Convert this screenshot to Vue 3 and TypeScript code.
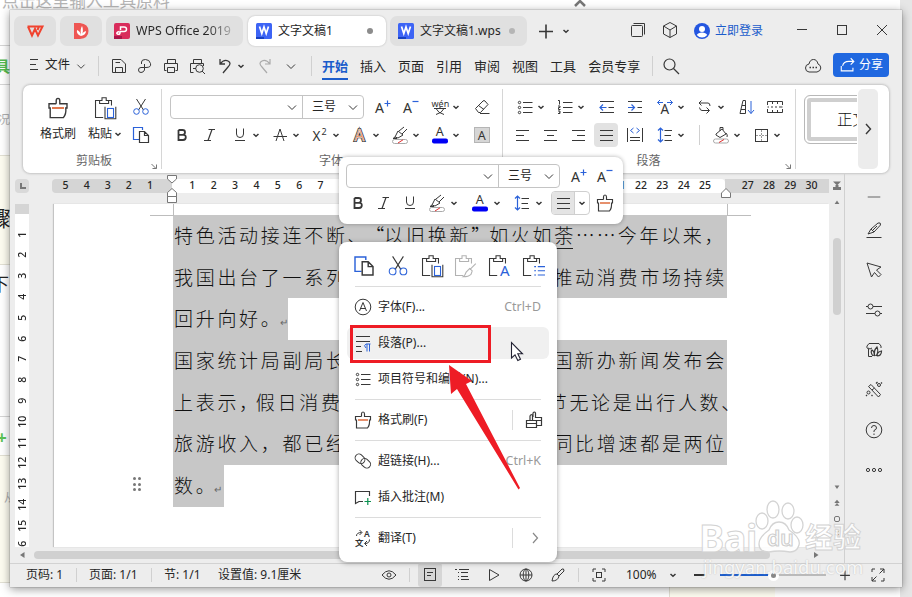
<script setup lang="ts">
import { h } from 'vue'

interface Tool { i?: string; split?: boolean; on?: boolean; gap?: number; sep?: boolean }

const B = 'stroke="#2b62d9"'
const clip = '<path d="M5.500 3.700H2.100V17.900H8.500M13 3.700H15.400V8M5.500 6.200V3.700H7.500V1.500H11V3.700H13V6.200Z"/>'
const pot = '<path d="M8.500 6.500V4Q8.500 2 10 2T11.500 4V6.500H17.500V10H16.500Q17 15 14.500 18H3.500V10H2.500V6.500H8.500" stroke-width="1.150"/><path d="M5 10H15" stroke="#d9541e" stroke-width="1.300"/>'
const hl = '<path d="M5 12L8 6L13 10L8 13ZM9 6L14 2M12 9L17 4M5 12L3 13.500H7"/><rect x="2.500" y="14.500" width="15" height="4" rx="2" stroke="#aaa"/><path d="M8 18L13 14.800" stroke="#e03030"/>'
const icons: Record<string, string> = {
  save: '<path d="M3.500 3.500H12L16.500 8V16.500H3.500ZM6.500 16V11.500H13.500V16M6.500 6.500H11"/>',
  pdf: '<path d="M6.500 8V6Q6.500 3.500 10.500 3.500T15.500 7.500T11 11.500H9.500V14Q8.500 16.500 6 16.500T3.500 14T6 11.500H9.500V8"/>',
  print: '<path d="M6.500 7V3.500H14.500V7M5.500 14.500H3.500V7.500H16.500V14.500H14.500M6.500 11.500H13.500V16.500H6.500Z"/>',
  preview: '<path d="M6.500 7V3.500H14.500V7M6.500 16.500H3.500V7.500H16.500V10M6 12.500H9"/><circle cx="12.500" cy="12.500" r="3.800"/><path d="M15 15L18 18"/>',
  undo: '<path d="M5 3V8H10M5 8Q9 3 13 5T13 11L8 17" stroke-width="1.300"/>',
  redo: '<path d="M15 3V8H10M15 8Q11 3 7 5T7 11L12 17" stroke="#aaa" stroke-width="1.200"/>',
  menu: '<path d="M6 4.500H14M6 9.500H12M6 14.500H14" stroke-width="1.200"/>',
  search: '<circle cx="8.500" cy="8.500" r="5.500" stroke-width="1.200"/><path d="M12.500 12.500L18 18" stroke-width="1.200"/>',
  cloud: '<path d="M6 16Q2.500 15.500 2.500 12T6 8Q7 3.500 10.500 3.500T15 8Q17.800 9 17.800 12T14 16Z"/><path d="M6.500 11.500h1.500M9.500 11.500h1.500M12.500 11.500h1.500" stroke-width="1.500"/>',
  share: '<path d="M2.500 11V16.500H15.500V13M4 11Q5 6 11 6H16M13 2.500L16.500 6L13 9.500" stroke="#fff" stroke-width="1.200"/>',
  stack: '<rect x="3.500" y="5.500" width="11" height="11" rx="1"/><path d="M5.500 3.500H16.500V14.500"/>',
  cube: '<path d="M10 2.500L16.500 6V14L10 17.500L3.500 14V6ZM3.500 6L10 10L16.500 6M10 10V17.500"/>',
  brush: pot,
  paste: clip + `<rect x="12.100" y="10.400" width="5" height="7.500" ${B}/><path d="M10 9V19H19V9"/>`,
  pasteFmt: '<g opacity=".38">' + clip + '<path d="M19 8L14 13M14 12L11 15Q10 18 8.500 19Q13 19 15 17L16 14Z"/></g>',
  pasteTxt: clip + '<text x="10.800" y="18.500" font-size="12.500" fill="#2b62d9" stroke="none">A</text>',
  pasteLst: clip + `<path d="M11 10.500h1.500M14 10.500h6M11 14h1.500M14 14h6M11 17.500h1.500M14 17.500h6" ${B}/>`,
  cut: `<path d="M5.500 2L12.500 13M14.500 2L7.500 13"/><circle cx="5.500" cy="14.500" r="2.800" ${B}/><circle cx="14.500" cy="14.500" r="2.800" ${B}/>`,
  copy: `<path d="M8 14.500H2.500V2.500H11.500V5" ${B} stroke-width="1.200"/><path d="M8.500 6.500H13.500L17.500 10.500V17.500H8.500ZM13.500 6.500V10.500H17.500" stroke-width="1.200"/>`,
  big: `<text x="2" y="16" font-size="14" stroke="none" fill="#333">A</text><path d="M11.500 6.500H17.500M14.500 3.500V9.500" ${B} stroke-width="1.200"/>`,
  small: `<text x="2" y="16" font-size="14" stroke="none" fill="#333">A</text><path d="M11.500 4.500H17.500" ${B} stroke-width="1.200"/>`,
  wen: '<text x="1.500" y="10" font-size="9" stroke="none" fill="#333">wén</text><path d="M4 11.500H16M10 9.500V11.500M6 11.500Q8 16 14 17.500M14 11.500Q12 16 6 17.500"/>',
  eraser: '<path d="M3.500 11.500L11 4Q12 3 13 4L16 7.500L8.500 15.500H6.500ZM6.500 8.500L12 12.500M8 16.500H17.500"/>',
  bold: '<path d="M6.500 5V15H11Q13.800 15 13.800 12.300T11 9.800H6.500M6.500 5H10.500Q13 5 13 7.300T10.500 9.800" stroke-width="1.800"/>',
  italic: '<path d="M8.500 4.500H15M4 15.500H11M12 4.500L8 15.500" stroke-width="1.200"/>',
  under: '<path d="M6.500 3.500V9Q6.500 12.500 10 12.500T13.500 9V3.500M5 15.500H15"/>',
  strike: '<path d="M6 16L10 4L14 16" /><path d="M3.500 11.500H17"/>',
  sup: '<text x="2.500" y="15.500" font-size="13.500" stroke="none" fill="#333">X</text><text x="11.500" y="9.500" font-size="9" stroke="none" fill="#333">2</text>',
  effect: '<text x="4.500" y="16" font-size="15.500" stroke="#333" stroke-width="2.200" fill="#fff">A</text><text x="4.500" y="16" font-size="15.500" stroke="#fff" stroke-width=".5" fill="#e8743b">A</text>',
  hl,
  color: '<text x="5.800" y="11" font-size="12.500" stroke="none" fill="#333">A</text><rect x="2" y="13.500" width="16" height="5" rx="2" fill="#0000f5" stroke="none"/>',
  shade: '<rect x="2.500" y="2.500" width="15" height="15" fill="#d6d6d6" stroke="#b5b5b5"/><text x="5.800" y="14.500" font-size="12.500" stroke="none" fill="#333">A</text>',
  bullets: '<circle cx="4.500" cy="5.500" r="1.200"/><circle cx="4.500" cy="10.500" r="1.200"/><circle cx="4.500" cy="15.500" r="1.200"/><path d="M8 5.500H17.500M8 10.500H17.500M8 15.500H17.500"/>',
  numbers: '<path d="M3 3.500H4.500V7.500M3 9H5V10.500H3.500V12.500H5.500M3 14H5V16.500H3M4 15.200H5"/><path d="M8 5.500H17.500M8 10.500H17.500M8 15.500H17.500"/>',
  outdent: `<path d="M3 4.500H17M11.500 10.500H17M3 15.500H17"/><path d="M3 10.500H9.500M6 7.500L3 10.500L6 13.500" ${B} stroke-width="1.200"/>`,
  indent: `<path d="M3 4.500H17M12.500 10.500H17M3 15.500H17"/><path d="M3 10.500H9.500M6.500 7.500L9.500 10.500L6.500 13.500" ${B} stroke-width="1.200"/>`,
  charw: `<text x="5.400" y="17" font-size="13.500" stroke="none" fill="#333">A</text><path d="M2.500 5.500H8M5 3L2.500 5.500L5 8M17.500 5.500H12M15 3L17.500 5.500L15 8" ${B}/>`,
  wrap: '<path d="M6.500 3.500L4 6L6.500 8.500M4 6H13Q15 6 15 9M4.500 10.500Q5 13.500 7 13.500H14M11.500 10.500L14.500 13.500L11.500 16.500"/>',
  sort: `<path d="M3 16.500L6 3.500H8.500V16.500ZM4 12.500H8.500M5 8.500H8.500"/><path d="M14 4V16.500M11 13L14 16.500L17 13" ${B}/>`,
  table: '<path d="M2.500 8V4.500H17.500V8M2.500 12V15.500H17.500V12M2.500 10H4M6 10H8M10 10H12M14 10H17.500M7.500 4.500V7M12.500 4.500V7M7.500 13V15.500M12.500 13V15.500"/>',
  left: '<path d="M4 5.500H17M4 10.500H12M4 15.500H17"/>',
  center: '<path d="M4 5.500H17M7 10.500H14M4 15.500H17"/>',
  right: '<path d="M4 5.500H17M9 10.500H17M4 15.500H17"/>',
  justify: '<path d="M4 5.500H17M4 10.500H17M4 15.500H17"/>',
  dist: `<path d="M3.500 3V17M18.500 3V17M6 12.500H16M6 15.500H16"/><path d="M9.500 3L6.500 5.500L9.500 8M12.500 3L15.500 5.500L12.500 8" ${B}/>`,
  spacing: `<path d="M9.500 5.500H17M9.500 10.500H16M9.500 15.500H17"/><path d="M5.500 3V17M3 5.500L5.500 3L8 5.500M3 14.500L5.500 17L8 14.500" ${B} stroke-width="1.200"/>`,
  bucket: '<path d="M5 9L11 4L15 9L9 12.500L5 10ZM9 6V2.500H12V5M15 8Q17 10 16 12"/><rect x="2.500" y="14" width="15" height="4" rx="2" stroke="#aaa"/><path d="M8 17.500L13 14.500" stroke="#e03030"/>',
  border: '<rect x="4.500" y="4.500" width="12" height="12"/><path d="M10.500 5V16.500M5 10.500H16.500" stroke="#999" stroke-dasharray="2 1"/>',
  font: '<circle cx="10" cy="10" r="7.800"/><path d="M6.500 14L10 5.500L13.500 14M7.500 11.500H12.500"/>',
  para: `<path d="M3 3.500H17M3 8.500H17M3 13.500H8M3 18.500H9"/><path d="M16.500 11V18.500M14 11V18.500M17.500 11H13Q10 12.500 13 15" ${B}/>`,
  pots: '<path d="M2.500 10.500H12.500V17.500H2.500ZM2.500 13.500H12.500M6 10V6Q7.500 3 8.500 6V10M9 7V3Q10.500 1 11.500 3V7.500H17.500V15.500H13M13 10.500H17.500" stroke-width="1.200"/>',
  link: '<rect x="1.800" y="4" width="10.500" height="7.500" rx="3.700" transform="rotate(42 7 7.700)"/><rect x="7.500" y="8.500" width="10.500" height="7.500" rx="3.700" transform="rotate(42 12.700 12.200)"/>',
  note: '<path d="M16.500 9V4.500H2.500V16.500L6 14.500H10" stroke-width="1.150"/><path d="M11.500 14.500H18M14.800 11V18" stroke="#0a9150" stroke-width="1.200"/>',
  trans: '<text x="11" y="9" font-size="8.500" font-weight="600" stroke="none" fill="#333">A</text><text x="2" y="17.500" font-size="8.500" font-weight="600" stroke="none" fill="#333">文</text><path d="M3.500 8Q3.500 4.500 8.500 4.500M6.500 2L9 4.500L6.500 7M16.500 11.500Q16.500 15.500 12 15.500M14 13L11.500 15.500L14 18"/>',
  eye: '<path d="M3 10Q10 1.500 17 10Q10 18.500 3 10Z"/><circle cx="10" cy="10" r="2"/>',
  doc: '<rect x="4.500" y="3.500" width="11" height="12"/><path d="M7 7.500H13M7 10.500H11"/>',
  outline: '<path d="M3 4.500H5M7 4.500H17M6 7.500H7M9 7.500H16M6 11.500H7M9 11.500H16M6 14.500H7M9 14.500H17"/>',
  play: '<path d="M5.500 4.500L15 10L5.500 15.500Z"/>',
  globe: '<circle cx="10" cy="10" r="6"/><ellipse cx="10" cy="10" rx="2.800" ry="6"/><path d="M4 10H16M10 4V16"/>',
  pen: '<path d="M9 9L14 4Q16 3 16 6L11 11ZM9 9Q5 9 4 16Q10 16 11 11"/>',
  fit: '<path d="M4 7V4H7M13 4H16V7M16 13V16H13M7 16H4V13"/><rect x="7.500" y="7.500" width="5" height="5"/>',
  full: '<path d="M4 7V4H7M16 13V16H13M11.500 8.500L16 4M12 4H16V8M8.500 11.500L4 16M4 12V16H8"/>',
  dash: '<path d="M3 10H17" stroke="#999" stroke-width="1.800"/>',
  draw: '<path d="M4 14L7 9L14 3Q17 2 16.500 5L10 12ZM7 9L10 12M2.500 17.500H17.500M9 10L13 6"/>',
  pointer: '<path d="M3 3L17 7L12.500 10L17 14.500L14.500 17L10.500 12.500L7.500 17Z"/>',
  sliders: '<circle cx="6.500" cy="6.500" r="2.500"/><path d="M2 6.500H4M9 6.500H18M2 13.500H11M16 13.500H18"/><circle cx="13.500" cy="13.500" r="2.500"/>',
  gallery: '<path d="M8 16.500H4.500V9Q2 8 3 6L5 3.500H15L17 6V8M4 8Q6 10 8 8"/><path d="M9 16Q6 12 8 10Q11 12 10 16M11 16Q9 11 13 7Q15 12 12 16M13 16Q13 12 17.500 11Q17.500 16 13 16" stroke-width="1.200"/>',
  wand: '<path d="M4.500 6.500L7 4.500L16.500 14.500L14.500 17ZM8 10L10.500 8"/><circle cx="15" cy="5" r="1.500"/><circle cx="4.500" cy="12.500" r="1.500"/><path d="M12 3.500L13.500 2M17 2.500L18 3.500M7.500 15L8.500 16M3 16L2 15" stroke-width="1.300"/>',
  help: '<circle cx="10" cy="10" r="7.800"/><path d="M7.500 8Q7.500 5.500 10 5.500T12.500 8Q12.500 9.500 10 10.500V12M10 13.500V15"/>',
  more: '<circle cx="4" cy="10" r="1.600"/><circle cx="10" cy="10" r="1.600"/><circle cx="16" cy="10" r="1.600"/>',
  caret: '<path d="M7.500 9L10 11.300L12.500 9" stroke-width="1.500"/>',
  down: '<path d="M6 8.500L10 12.500L14 8.500"/>',
  next: '<path d="M8 5L12.500 10L8 15" stroke-width="1.400"/>',
  sub: '<path d="M9 5L13.500 10L9 15" stroke="#888" stroke-width="1.200"/>',
  launch: '<path d="M7.500 8L12 12.500M12.500 8.500V12.500H8.500" stroke="#777"/>',
  plus: '<path d="M3 10.500H17M10 3.500V17.500" stroke-width="1.600"/>',
  min: '<path d="M5 9.500H15"/>',
  max: '<rect x="5.500" y="5.500" width="9" height="9"/>',
  close: '<path d="M5 5L15 15M15 5L5 15"/>',
  user: '<circle cx="10" cy="10" r="8" fill="#2456e0" stroke="none"/><circle cx="10" cy="8" r="3" fill="#fff" stroke="none"/><path d="M4.800 14Q6 11.500 10 11.500T15.200 14Q13 16.500 10 16.500T4.800 14Z" fill="#fff" stroke="none"/>',
  wps: '<path d="M2.500 5.500H14L12.500 9M3 5.500L7 14.500L10 8L13 14.500L17.500 5.500H13" stroke="#f0432f" stroke-width="2"/>',
  docer: '<path d="M3 2H9Q17.500 3 17.500 10T9 18H3Z" fill="#ee5653" stroke="none"/><path d="M10 15Q5 13 6 9Q9 10 10 14Q9 8 11 5Q13 9 10.500 15Q11 11 15 10Q15 14 10 15Z" fill="#fff" stroke="none"/>',
  red: '<rect x="2" y="2" width="16" height="16" rx="2" fill="#d92c5b" stroke="none"/><path d="M2 15H10V18H2Z" fill="#a8164a" stroke="none"/><path d="M8.500 9V6H12Q14.500 6 14.500 8.200T12 10.500H8V12Q7.500 14 5.500 13T7 10.500" stroke="#fff" stroke-width="1.500"/>',
  blue: '<rect x="2" y="2" width="16" height="16" rx="1.500" fill="#3d64f5" stroke="none"/><path d="M2 16H10V18H2Z" fill="#1740c0" stroke="none"/><path d="M5.500 5.500L7.800 12.500L10 6L12.200 12.500L14.500 5.500" stroke="#fff" stroke-width="1.700"/>',
  pin: '<path d="M6 4.500H14L10 8.500ZM8.500 8H11.500V10H8.500ZM6 10H14V13H6Z" fill="#777" stroke="none"/>',
  up: '<path d="M7 12.500H13L10 8Z" fill="#777" stroke="none"/>',
  dn: '<path d="M7 8H13L10 12.500Z" fill="#777" stroke="none"/>',
  upup: '<path d="M7 9.500H13L10 6ZM7 13.500H13L10 10ZM7 9.500H13V10H7Z" fill="#777" stroke="none"/>',
  dndn: '<path d="M7 6H13L10 9.500ZM7 10H13L10 13.500Z" fill="#777" stroke="none"/>',
  ltri: '<path d="M12.500 7V13L8 10Z" fill="#777" stroke="none"/>',
  rtri: '<path d="M8 7V13L12.500 10Z" fill="#777" stroke="none"/>',
}
const Icon = (p: { n: string }) => h('svg', { class: 'ic', viewBox: '0 0 20 20', innerHTML: icons[p.n] })

const quick: Tool[] = [{ i: 'save' }, { i: 'pdf' }, { i: 'print' }, { i: 'preview' }]
const menus = ['开始', '插入', '页面', '引用', '审阅', '视图', '工具', '会员专享']
const font1: Tool[] = [{ i: 'big' }, { i: 'small' }, { gap: 3 }, { i: 'wen', split: true }, { i: 'eraser' }]
const font2: Tool[] = [{ i: 'bold' }, { i: 'italic' }, { gap: 4 }, { i: 'under', split: true }, { i: 'strike', split: true }, { i: 'sup', split: true }, { i: 'effect', split: true }, { i: 'hl', split: true }, { i: 'color', split: true }, { i: 'shade' }]
const para1: Tool[] = [{ gap: 5 }, { i: 'bullets', split: true }, { i: 'numbers', split: true }, { i: 'outdent' }, { i: 'indent' }, { gap: 4 }, { i: 'charw', split: true }, { i: 'wrap', split: true }, { i: 'sort' }, { i: 'table' }]
const para2: Tool[] = [{ i: 'left' }, { i: 'center' }, { i: 'right' }, { i: 'justify', on: true }, { i: 'dist' }, { gap: 5 }, { i: 'spacing', split: true }, { gap: 6 }, { sep: true }, { gap: 9 }, { i: 'bucket', split: true }, { i: 'border', split: true }]
const clips = ['copy', 'cut', 'paste', 'pasteFmt', 'pasteTxt', 'pasteLst']
const side = ['dash', 'draw', 'pointer', 'sliders', 'gallery', 'wand', 'help', 'more']

interface Entry { icon: string; label: string; key?: string; extra?: string; hover?: boolean }
const sections: Entry[][] = [
  [
    { icon: 'font', label: '字体(F)...', key: 'Ctrl+D' },
    { icon: 'para', label: '段落(P)...', hover: true },
    { icon: 'bullets', label: '项目符号和编号(N)...' },
  ],
  [{ icon: 'brush', label: '格式刷(F)', extra: 'pots' }],
  [
    { icon: 'link', label: '超链接(H)...', key: 'Ctrl+K' },
    { icon: 'note', label: '插入批注(M)' },
  ],
  [{ icon: 'trans', label: '翻译(T)', extra: 'sub' }],
]
const lines: { a: string; c?: string; b?: string; kind?: string }[] = [
  { a: '特色活动接连不断、', kind: 'first' },
  { a: '我国出台了一系列', b: '推动消费市场持续' },
  { a: '回升向好。', kind: 'end' },
  { a: '国家统计局副局长', b: '国新办新闻发布会' },
  { a: '上表示，', c: '假日消费', b: '节无论是出行人数、', kind: 'tight' },
  { a: '旅游收入，都已经', b: '同比增速都是两位' },
  { a: '数。', kind: 'end' },
]
</script>

<template>
  <div class="desk">
    <div class="behind">
      <i class="b-line l1"></i><i class="b-line l2"></i><i class="b-line l3"></i><i class="b-cream c1"></i><i class="b-cream c2"></i><i class="b-cream c3"></i>
      <span class="b-title">点击这里输入工具原料</span>
      <span class="b-green">工具</span>
      <span class="b-gray">况</span>
      <span class="b-dark">骤</span>
      <span class="b-dark two">下</span>
      <span class="b-plus">+</span>
      <span class="b-gray low">从</span>
      <svg class="b-up" viewBox="0 0 14 8"><path d="M2 7L7 2L12 7" fill="none" stroke="#777" stroke-width="2.500" /></svg>
    </div>

    <div class="win">
      <header class="tabs">
        <div class="tab ico"><Icon n="wps" /></div>
        <div class="tab ico"><Icon n="docer" /></div>
        <div class="tab wide"><Icon n="red" /><span class="fade">WPS Office 2019</span></div>
        <div class="tab wide active"><Icon n="blue" /><span>文字文稿1</span><i class="dot"></i></div>
        <div class="tab wide"><Icon n="blue" /><span>文字文稿1.wps</span><i class="dot pale"></i></div>
        <div class="add"><Icon n="plus" /><Icon n="caret" /></div>
        <div class="account"><Icon n="stack" /><Icon n="cube" /><span class="login"><Icon n="user" />立即登录</span></div>
        <div class="sys"><Icon n="min" /><Icon n="max" /><Icon n="close" /></div>
      </header>

      <nav class="menubar">
        <Icon n="menu" class="burger" /><span class="file">文件</span><Icon n="down" class="fdown" />
        <i class="vs"></i>
        <div class="quick"><Icon v-for="q in quick" :key="q.i" :n="q.i!" /></div>
        <Icon n="undo" class="undo" /><Icon n="caret" class="ucaret" /><Icon n="redo" class="redo" /><Icon n="down" class="qdown" />
        <i class="vs"></i>
        <div class="menus"><span v-for="(m, k) in menus" :key="m" :class="{ cur: k === 0 }">{{ m }}</span></div>
        <i class="vs"></i>
        <Icon n="search" class="find" />
        <div class="right"><Icon n="cloud" /><button class="share"><Icon n="share" />分享</button></div>
      </nav>

      <section class="ribbon">
        <div class="group clipb">
          <div class="clip-body">
            <div class="bigbtn"><Icon n="brush" class="lg" /><span>格式刷</span></div>
            <div class="bigbtn"><Icon n="paste" class="lg" /><span>粘贴<Icon n="caret" class="in" /></span></div>
            <div class="pair"><Icon n="cut" /><Icon n="copy" /></div>
          </div>
          <footer>剪贴板<Icon n="launch" class="launch" /></footer>
        </div>
        <div class="group fontg">
          <div class="tools">
            <div class="combo"><span class="name"><Icon n="down" /></span><span class="size">三号<Icon n="down" /></span></div>
            <template v-for="(t, k) in font1" :key="k">
              <i v-if="t.gap" :style="{ width: t.gap + 'px' }"></i>
              <span v-else class="tool" :class="{ split: t.split }"><Icon :n="t.i!" /><Icon v-if="t.split" n="caret" class="cr" /></span>
            </template>
          </div>
          <div class="tools low">
            <template v-for="(t, k) in font2" :key="k">
              <i v-if="t.gap" :style="{ width: t.gap + 'px' }"></i>
              <span v-else class="tool" :class="{ split: t.split }"><Icon :n="t.i!" /><Icon v-if="t.split" n="caret" class="cr" /></span>
            </template>
          </div>
          <footer>字体</footer>
        </div>
        <div class="group parag">
          <div v-for="(row, r) in [para1, para2]" :key="r" class="tools">
            <template v-for="(t, k) in row" :key="k">
              <i v-if="t.gap" :style="{ width: t.gap + 'px' }"></i>
              <i v-else-if="t.sep" class="vs"></i>
              <span v-else class="tool" :class="{ split: t.split, on: t.on }"><Icon :n="t.i!" /><Icon v-if="t.split" n="caret" class="cr" /></span>
            </template>
          </div>
          <footer>段落<Icon n="launch" class="launch" /></footer>
        </div>
        <div class="styles">
          <div class="style-clip"><div class="style-card">正文</div></div>
          <div class="style-next"><Icon n="next" /></div>
        </div>
      </section>

      <main class="work">
        <div class="canvas">
          <div class="hruler">
            <span class="corner"><i></i></span>
            <div class="neg"><b v-for="n in 5" :key="n">{{ 6 - n }}</b></div>
            <div class="pos"><b v-for="n in 25" :key="n">{{ n }}</b></div>
            <div class="after"><b v-for="n in [27, 28, 29, 30]" :key="n">{{ n }}</b></div>
            <svg class="mark m1" viewBox="0 0 12 30"><path d="M1.500 1.500H10.500V5L6 9L1.500 5ZM1.500 28.500H10.500V22.500H1.500ZM1.500 22.500H10.500V18.500L6 14.500L1.500 18.500Z" fill="#fff" stroke="#777" /></svg>
            <svg class="mark m2" viewBox="0 0 12 12"><path d="M1.500 10.500H10.500V6L6 1.500L1.500 6Z" fill="#fff" stroke="#777" /></svg>
          </div>
          <div class="mid">
            <div class="vruler"><b v-for="n in 16" :key="n">{{ n }}</b></div>
            <article class="page">
              <i class="crop cl"></i><i class="crop cr2"></i>
              <div class="grip"><i v-for="n in 6" :key="n"></i></div>
              <p v-for="(l, k) in lines" :key="k" class="line" :class="l.kind">
                <span>{{ l.a }}</span>
                <span v-if="l.c" class="near">{{ l.c }}</span>
                <span v-if="l.kind === 'first'" class="rest"><em>“</em>以旧换新<em>”</em>如火如<u>荼</u><span class="dots">……</span>今年以来，</span>
                <span v-if="l.b" class="tail">{{ l.b }}</span>
                <small v-if="l.kind === 'end'">↵</small>
              </p>
            </article>
          </div>
          <div class="hscroll"><Icon n="ltri" /><i></i><Icon n="rtri" /></div>
        </div>
        <div class="vscroll">
          <Icon n="pin" class="pin" /><Icon n="up" class="st" /><i></i>
          <div class="vend"><Icon n="dn" class="st" /><Icon n="upup" class="st" /><em></em><Icon n="dndn" class="st" /></div>
        </div>
        <aside class="side"><Icon v-for="s in side" :key="s" :n="s" /></aside>
      </main>

      <footer class="status">
        <span class="s1">页码: 1</span><i class="vs"></i><span class="s2">页面: 1/1</span><i class="vs"></i><span class="s3">节: 1/1</span><span class="s4">设置值: 9.1厘米</span>
        <div class="views">
          <Icon n="eye" /><i class="vs"></i><span class="von"><Icon n="doc" /></span><Icon n="outline" class="v1" /><Icon n="play" class="v2" /><Icon n="globe" class="v2" /><Icon n="pen" class="v2" /><i class="vs v3"></i><Icon n="fit" class="v4" />
          <span class="pct">100%</span><Icon n="caret" class="pc" /><i class="minus"></i>
          <div class="slider"><i></i></div><Icon n="plus" class="pl" /><Icon n="full" class="fs" />
        </div>
      </footer>
    </div>

    <div class="mini">
      <div class="mrow">
        <div class="combo"><span class="name"><Icon n="down" /></span><span class="size">三号<Icon n="down" /></span></div>
        <Icon n="big" class="mbig" /><Icon n="small" class="msmall" />
      </div>
      <div class="mrow second">
        <span class="t26"><Icon n="bold" /></span><span class="t26"><Icon n="italic" /></span><span class="t26"><Icon n="under" /></span>
        <span v-for="n in ['hl', 'color', 'spacing']" :key="n" class="tool split"><Icon :n="n" /><Icon n="caret" class="cr" /></span>
        <span class="pick"><span><Icon n="justify" /></span><Icon n="caret" /></span>
        <Icon n="brush" class="mbrush" />
      </div>
    </div>

    <div class="ctx">
      <div class="clips"><Icon v-for="c in clips" :key="c" :n="c" class="lg" /></div>
      <template v-for="(s, k) in sections" :key="k">
        <hr />
        <div v-for="e in s" :key="e.label" class="entry" :class="{ hover: e.hover }">
          <Icon :n="e.icon" /><span>{{ e.label }}</span>
          <kbd v-if="e.key">{{ e.key }}</kbd>
          <span v-if="e.extra" class="extra"><Icon :n="e.extra" /></span>
        </div>
      </template>
    </div>

    <div class="redbox"></div>
    <svg class="over" viewBox="0 0 912 597">
      <path d="M449 365L472 381L466 384L520 488L518.500 489.500L457 389L451 394Z" fill="#ee1c25" />
      <path d="M511.500 342.500V358L515 354.800L517.800 360.500L520.500 359.200L517.800 353.800H522.500Z" fill="#fff" stroke="#223" stroke-width="1.100" />
    </svg>

    <div class="mark-bd">
      <div class="bd-top"><span class="bai">Bai</span>
        <svg viewBox="0 0 50 54"><g fill="#fff" fill-opacity=".85" stroke="#d4d4d4" stroke-width="1.300"><ellipse cx="7" cy="21" rx="6" ry="8" /><ellipse cx="18" cy="9.500" rx="6" ry="8.500" /><ellipse cx="33" cy="11" rx="6" ry="8" /><ellipse cx="42" cy="25" rx="6" ry="8" /><path d="M24 22Q31 22 34 30Q46 38 44 45Q42 52 35 52Q24 50 14 52Q4 52 4 44Q4 37 14 30Q17 22 24 22Z" /></g><text x="12" y="46" font-size="21" font-weight="600" fill="#fff" stroke="#cfcfcf" stroke-width="1.200">du</text></svg>
        <span class="cn">经验</span></div>
      <div class="bd-url">jingyan.baidu.com</div>
    </div>
  </div>
</template>

<style>
html, body { overflow: hidden; background: #fff; }
</style>

<style scoped>
* { box-sizing: border-box; }
.desk { position: relative; width: 912px; height: 597px; overflow: hidden; background: #fff; font: 12px/16px "Noto Sans", "Noto Sans CJK SC", sans-serif; color: #262626; }
.ic { width: 20px; height: 20px; flex: none; fill: none; stroke: #383838; stroke-width: 1; display: block; }
.lg { width: 24px; height: 24px; stroke-width: .9; }
i { flex: none; font-style: normal; display: block; }
.vs { width: 1px; height: 20px; background: #d0d0d0; }

.behind { position: absolute; inset: 0; background: linear-gradient(90deg, #fff 900px, #e6e6e6 900px); }
.behind > * { position: absolute; }
.b-title { left: 2px; top: -11px; font-size: 16.800px; line-height: 24px; color: #b5b5b5; }
.b-green { right: 902px; top: 58px; font-size: 15px; font-weight: 700; color: #53bb4e; white-space: nowrap; }
.b-gray { right: 902px; top: 112px; color: #b0b0b0; }
.b-gray.low { top: 490px; right: 896px; }
.b-dark { right: 901px; top: 205px; font-size: 21px; line-height: 26px; color: #222; }
.b-dark.two { top: 271px; right: 903px; font-size: 18px; }
.b-plus { left: -3px; top: 430px; font-size: 17px; font-weight: 700; color: #5cc353; }
.b-line { left: 0; width: 12px; height: 1px; background: #d5d5d5; }
.l1 { top: 45px; } .l2 { top: 84px; } .l3 { top: 416px; }
.b-cream { left: -2px; width: 14px; background: #fdfcf0; border: 1px solid #e2e0d4; border-width: 1px 0; }
.c1 { top: 155px; height: 110px; } .c2 { top: 455px; height: 128px; } .c3 { left: 669px; top: 580px; width: 106px; height: 30px; border-left-width: 1px; }
.b-up { left: 573px; top: -1px; width: 14px; height: 8px; }

.win { position: absolute; left: 10px; top: 10px; width: 892px; height: 577px; background: #ededed; box-shadow: 0 2px 9px rgba(0, 0, 0, .42), 0 0 1px #777; display: flex; flex-direction: column; }
.tabs { display: flex; gap: 4px; padding: 6px 0 0 4px; height: 36px; flex: none; }
.tab { height: 30px; border-radius: 7px; background: #e0e0e0; display: flex; align-items: center; white-space: nowrap; }
.tab.ico { width: 42px; justify-content: center; }
.tab.wide { width: 137px; padding: 0 10px 0 6px; gap: 4px; }
.tab.active { background: #fff; width: 138px; margin-left: 1px; box-shadow: 0 0 2px rgba(0, 0, 0, .25); }
.dot { width: 6px; height: 6px; border-radius: 50%; background: #8c8c8c; margin-left: auto; margin-right: 3px; }
.dot.pale { background: #b5b5b5; margin-right: 2px; }
.fade { font-size: 12.400px; background: linear-gradient(90deg, #262626 75%, #aaa); -webkit-background-clip: text; color: transparent; }
.add, .account, .sys { display: flex; align-items: center; height: 30px; }
.add { margin-left: 5px; }
.account { margin-left: 48px; gap: 12px; }
.account .ic { margin-top: -2px; }
.account .login { display: flex; align-items: center; gap: 3px; color: #1b5ccb; margin-top: -1px; }
.account .login .ic { margin-top: 0; }
.sys { margin-left: 25px; gap: 20px; }
.sys .ic { margin-top: -2px; }

.menubar { display: flex; align-items: center; height: 39px; flex: none; padding: 0 13px 0 14px; }
.burger { margin-top: -1px; }
.file { margin-left: 1px; margin-top: -1px; font-size: 12.500px; }
.fdown { margin-left: 2px; width: 18px; height: 18px; }
.fdown + .vs { margin: 0 10px 0 8px; }
.quick { display: flex; gap: 6px; }
.undo { margin-left: 8px; }
.ucaret { margin-left: -4px; }
.redo { margin-left: 4px; }
.qdown { margin: 0 10px 0 6px; }
.menus { display: flex; gap: 12px; margin: 0 12px 0 10px; font-size: 13px; line-height: 20px; white-space: nowrap; padding-top: 0; }
.menus .cur { color: #1b5ccb; font-weight: 600; position: relative; }
.menus .cur::after { content: ""; position: absolute; left: 0; right: 0; bottom: -4px; height: 2px; background: #1b5ccb; }
.find { margin-left: 8px; }
.right { margin-left: auto; display: flex; align-items: center; gap: 10px; }
.share { width: 56px; height: 24px; margin-top: -1px; padding: 0 6px; border: 0; border-radius: 4px; background: #2068e0; color: #fff; font: inherit; display: flex; align-items: center; gap: 2px; white-space: nowrap; }
.share .ic { width: 18px; height: 18px; }

.ribbon { display: flex; height: 88px; flex: none; margin: 0 13px; background: #fff; border-radius: 7px; box-shadow: 0 0 3px rgba(0, 0, 0, .35); padding: 4px 0; }
.group { border-right: 1px solid #d6d6d6; display: flex; flex-direction: column; padding-top: 4px; height: 80px; }
.group footer { margin-top: auto; height: 17px; line-height: 18px; text-align: center; color: #666; position: relative; }
.launch { position: absolute; right: -3px; bottom: -7px; }
.clipb { width: 139px; }
.clipb footer { padding-left: 4px; }
.clip-body { display: flex; height: 56px; padding-left: 14px; }
.bigbtn { width: 42px; display: flex; flex-direction: column; align-items: center; gap: 6px; padding-top: 3px; white-space: nowrap; }
.bigbtn + .bigbtn { width: 52px; }
.bigbtn span { display: flex; height: 16px; }
.bigbtn .in { width: 20px; margin: -2px -6px 0 -4px; }
.pair { display: flex; flex-direction: column; gap: 8px; margin-left: 0; padding-top: 4px; }
.fontg { width: 341px; padding-left: 6px; }
.tools { display: flex; height: 28px; align-items: center; }
.tool { width: 28px; height: 24px; flex: none; display: flex; align-items: center; justify-content: center; border-radius: 4px; }
.tool.split { width: 40px; justify-content: flex-start; padding-left: 2px; }
.cr { margin-left: -4px; }
.tool.on { background: #e2e2e2; width: 24px; margin: 0 2px; }
.combo { display: flex; width: 194px; height: 24px; border: 1px solid #c4c4c4; border-radius: 4px; background: #fff; margin: 0 5px 0 2px; flex: none; }
.combo span { display: flex; align-items: center; }
.combo .name { flex: 1; justify-content: flex-end; border-right: 1px solid #c4c4c4; }
.combo .size { width: 60px; justify-content: space-between; padding-left: 9px; white-space: nowrap; }
.fontg footer { padding-right: 8px; }
.parag { width: 293px; padding-left: 5px; }
.parag footer { padding-right: 6px; }
.parag .launch { right: -3px; }
.styles { width: 93px; display: flex; padding: 0 11px 0 8px; height: 80px; gap: 1px; }
.style-clip { width: 54px; overflow: hidden; padding-top: 6px; }
.style-card { width: 80px; height: 49px; border: 1px solid #b8b8b8; border-radius: 6px; box-shadow: inset 0 0 0 2px #fff, inset 0 0 0 6px #cfcfcf; font-size: 15.500px; font-weight: 300; line-height: 46px; padding-left: 32px; white-space: nowrap; color: #111; }
.style-next { width: 20px; border-radius: 5px; background: #ececec; display: flex; align-items: center; justify-content: center; flex: none; }

.work { flex: 1; display: flex; min-height: 0; }
.canvas { width: 819px; display: flex; flex-direction: column; }
.hruler { position: relative; display: flex; height: 31px; padding-top: 6px; flex: none; font-size: 10.500px; line-height: 13px; }
.hruler > * { height: 14px; flex: none; }
.hruler b, .vruler b { font-weight: 500; text-align: center; flex: none; }
.corner { width: 14px; margin: 0 23px 0 5px; background: #d9d9d9; border-radius: 4px; padding: 4px 0 0 5px; }
.corner i { width: 6px; height: 6px; border: solid #777; border-width: 0 0 2px 2px; }
.neg { width: 120px; background: #d5d5d5; border-radius: 4px 0 0 4px; display: flex; padding-left: 3px; }
.neg b { width: 21.100px; }
.pos { width: 553px; background: #fff; display: flex; padding-left: 9.700px; border-radius: 4px; }
.pos b { width: 21.370px; }
.after { width: 104px; background: #d5d5d5; display: flex; padding-left: 12px; overflow: hidden; }
.after b { width: 21.300px; }
.hruler .mark { position: absolute; width: 12px; }
.hruler .m1 { left: 156px; top: 1px; height: 30px; }
.hruler .m2 { left: 710px; top: 14px; height: 12px; }
.mid { display: flex; height: 343px; }
.vruler { width: 14px; margin: 0 25px 0 5px; height: 343px; overflow: hidden; background: linear-gradient(#d5d5d5 10px, #fff 10px); padding-top: 19.600px; font-size: 10.500px; line-height: 14px; flex: none; }
.vruler b { display: block; height: 20.800px; width: 14px; writing-mode: vertical-rl; transform: rotate(180deg); }
.page { position: relative; width: 775px; background: #fff; box-shadow: -1px 0 1px #c4c4c4; padding: 11px 0 0 119px; }
.crop { position: absolute; width: 24px; height: 12px; top: 0; border: 0 solid #bdbdbd; border-bottom-width: 1px; }
.cl { left: 96px; border-right-width: 1px; }
.cr2 { left: 673px; border-left-width: 1px; }
.grip { position: absolute; left: 79px; top: 273px; display: grid; grid-template-columns: 3px 3px; gap: 2.500px 2px; }
.grip i { width: 3px; height: 3px; border-radius: 50%; background: #777; }
.line { margin: 0; width: 554px; height: 41.700px; line-height: 40px; background: #c7c7c7; display: flex; justify-content: space-between; padding: 0 0 0 1px; font-size: 19px; letter-spacing: 2.700px; font-weight: 300; font-family: "Noto Sans CJK SC", sans-serif; color: #111; white-space: nowrap; }
.line .rest { margin-left: -2px; flex: 1; }
.line em { font-style: normal; display: inline-block; width: 18px; overflow: hidden; letter-spacing: 0; vertical-align: top; }
.line em:first-child { direction: rtl; width: 17px; }
.dots { letter-spacing: 2px; }
.line u { text-decoration: none; border-bottom: 1px solid #222; letter-spacing: 0; margin-right: 2.500px; }
.line.end { width: 115px; justify-content: flex-start; }
.line.end:last-child { width: 51px; }
.line small { font-size: 10px; letter-spacing: 0; padding-top: 4px; color: #666; margin-left: -3px; }
.line .near { margin: 0 auto 0 -5px; }
.line.tight .tail { margin-right: -16px; }
.hscroll { height: 16px; display: flex; align-items: center; padding: 0 3px 0 2px; }
.hscroll i { width: 736px; height: 8px; border-radius: 4px; background: #d0d0d0; margin-left: 2px; }
.hscroll .ic:last-child { margin-left: auto; }
.vscroll { width: 16px; display: flex; flex-direction: column; align-items: center; border-right: 1px solid #d0d0d0; padding-top: 4px; }
.vscroll .pin { height: 20px; }
.vscroll .st { height: 16px; }
.pin + .st { margin-top: -3px; }
.vscroll > i { width: 8px; height: 77px; border-radius: 4px; background: #d0d0d0; margin-top: 28px; }
.vend { margin: auto 0 21px; display: flex; flex-direction: column; align-items: center; }
.vend em { width: 6px; height: 6px; border: 1.500px solid #777; border-radius: 2px; margin: 5px 0 4px; }
.side { flex: 1; display: flex; flex-direction: column; align-items: center; gap: 20px; padding-top: 15px; }
.side .ic:first-child { height: 18px; margin-bottom: -6px; }

.status { height: 24px; flex: none; border-top: 1px solid #d2d2d2; display: flex; align-items: center; padding: 0 0 1px 16px; white-space: nowrap; }
.status .vs { height: 14px; }
.s1 { width: 50px; } .s2 { width: 62px; margin-left: 12px; } .s3 { width: 54px; margin-left: 12px; }
.views { margin-left: auto; display: flex; align-items: center; width: 523px; flex: none; }
.views > .vs:nth-child(2) { margin: 0 8px 0 10px; }
.von { width: 24px; height: 24px; background: #d6d6d6; border-radius: 3px; display: flex; align-items: center; justify-content: center; }
.v1 { margin-left: 10px; } .v2 { margin-left: 12px; } .v3 { margin-left: 10px; } .v4 { margin-left: 10px; }
.pct { margin-left: 17px; width: 33px; } .pc { margin-left: 4px; }
.minus { width: 12px; height: 2px; background: #333; margin-left: 11px; }
.slider { width: 106px; height: 2px; margin-left: 14px; background: linear-gradient(90deg, #1b5ccb 50%, #bbb 50%); display: flex; align-items: center; justify-content: center; }
.slider i { width: 11px; height: 11px; border: 3px solid #fff; border-radius: 50%; background: #888; }
.pl { width: 14px; height: 14px; stroke-width: 2; margin-left: 12px; } .fs { margin-left: 16px; }

.mini { position: absolute; left: 339px; top: 157px; width: 284px; height: 67px; border-radius: 8px; background: #fff; box-shadow: 0 0 4px rgba(0, 0, 0, .32); padding: 7px 7px 0; }
.mrow { display: flex; align-items: center; height: 24px; }
.mini .combo { width: 214px; margin: 0; }
.mbig { margin-left: 9px; } .msmall { margin-left: 6px; }
.second { margin-top: 3px; }
.t26 { width: 26px; display: flex; justify-content: center; flex: none; }
.second .tool { width: 42px; margin-left: 2px; margin-right: -1.500px; }
.second .cr { margin-left: -3px; }
.t26:first-child { margin-left: -1px; }
.pick { display: flex; width: 39px; height: 24px; border: 1px solid #cfcfcf; border-radius: 4px; overflow: hidden; align-items: center; flex: none; }
.pick > span { width: 23px; height: 24px; background: #e4e4e4; border-right: 1px solid #cfcfcf; display: flex; align-items: center; justify-content: center; flex: none; }
.pick > .ic { margin-left: -3px; }
.mbrush { margin-left: 5px; }

.ctx { position: absolute; left: 339px; top: 242px; width: 218px; height: 320px; border-radius: 8px; background: #fff; box-shadow: 0 1px 5px rgba(0, 0, 0, .34); padding: 6px 8px; }
.clips { display: flex; height: 36px; align-items: center; gap: 9.800px; padding-left: 5px; }
hr { margin: 2px 8px; height: 1px; border: 0; background: #dcdcdc; }
.entry { height: 36px; display: flex; align-items: center; padding: 0 8px 0 6px; gap: 5px; white-space: nowrap; }
.hover { background: #f0f0f0; border-radius: 6px; height: 32px; margin: 2px 0; }
kbd { margin-left: auto; font: inherit; font-size: 12.400px; color: #999; }
.extra { margin-left: auto; padding-left: 11px; margin-right: -3px; border-left: 1px solid #dcdcdc; }
.redbox { position: absolute; left: 350px; top: 325px; width: 141px; height: 38px; border: 3px solid #ee1c25; }
.over { position: absolute; left: 0; top: 0; width: 912px; height: 597px; }

.mark-bd { position: absolute; left: 699px; top: 499px; width: 170px; color: rgba(255, 255, 255, .9); }
.bd-top { display: flex; align-items: flex-end; height: 55px; font-size: 38px; line-height: 34px; font-weight: 700; -webkit-text-stroke: .9px #d2d2d2; }
.bai { width: 56px; letter-spacing: -.5px; flex: none; }
.bd-top svg { width: 50px; height: 54px; -webkit-text-stroke: 0; flex: none; }
.bd-top .cn { font-size: 28px; white-space: nowrap; }
.bd-url { font-size: 18.500px; line-height: 22px; margin-top: 2px; margin-left: 4px; text-shadow: 0 0 1.500px #b0b0b0; white-space: nowrap; }
</style>
